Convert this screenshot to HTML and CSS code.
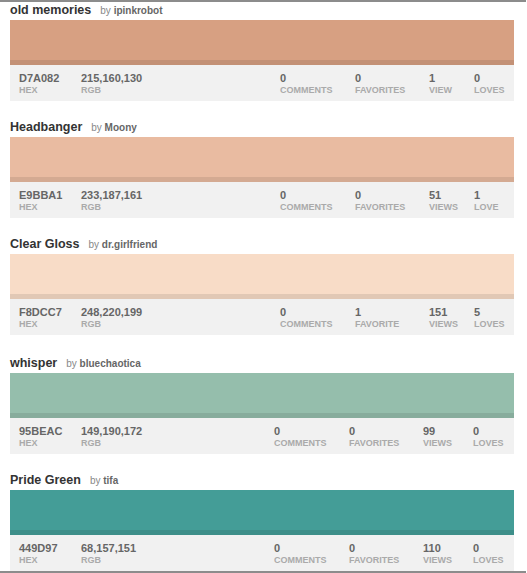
FILE: index.html
```html
<!DOCTYPE html>
<html>
<head>
<meta charset="utf-8">
<link rel="stylesheet" href="styles.css">
</head>
<body>
<div class="frame">
  <div class="card">
    <div class="title"><span class="name">old memories</span><span class="by">by <b>ipinkrobot</b></span></div>
    <div class="swatch" style="background:#D7A082"></div>
    <div class="info">
      <div class="stat hex"><b>D7A082</b><span>HEX</span></div>
      <div class="stat rgb"><b>215,160,130</b><span>RGB</span></div>
      <div class="stat comments"><b>0</b><span>COMMENTS</span></div>
      <div class="stat favs"><b>0</b><span>FAVORITES</span></div>
      <div class="stat views"><b>1</b><span>VIEW</span></div>
      <div class="stat loves"><b>0</b><span>LOVES</span></div>
    </div>
  </div>
  <div class="card">
    <div class="title"><span class="name">Headbanger</span><span class="by">by <b>Moony</b></span></div>
    <div class="swatch" style="background:#E9BBA1"></div>
    <div class="info">
      <div class="stat hex"><b>E9BBA1</b><span>HEX</span></div>
      <div class="stat rgb"><b>233,187,161</b><span>RGB</span></div>
      <div class="stat comments"><b>0</b><span>COMMENTS</span></div>
      <div class="stat favs"><b>0</b><span>FAVORITES</span></div>
      <div class="stat views"><b>51</b><span>VIEWS</span></div>
      <div class="stat loves"><b>1</b><span>LOVE</span></div>
    </div>
  </div>
  <div class="card">
    <div class="title"><span class="name">Clear Gloss</span><span class="by">by <b>dr.girlfriend</b></span></div>
    <div class="swatch" style="background:#F8DCC7"></div>
    <div class="info">
      <div class="stat hex"><b>F8DCC7</b><span>HEX</span></div>
      <div class="stat rgb"><b>248,220,199</b><span>RGB</span></div>
      <div class="stat comments"><b>0</b><span>COMMENTS</span></div>
      <div class="stat favs"><b>1</b><span>FAVORITE</span></div>
      <div class="stat views"><b>151</b><span>VIEWS</span></div>
      <div class="stat loves"><b>5</b><span>LOVES</span></div>
    </div>
  </div>
  <div class="card card-wide card-spaced">
    <div class="title"><span class="name">whisper</span><span class="by">by <b>bluechaotica</b></span></div>
    <div class="swatch" style="background:#95BEAC"></div>
    <div class="info">
      <div class="stat hex"><b>95BEAC</b><span>HEX</span></div>
      <div class="stat rgb"><b>149,190,172</b><span>RGB</span></div>
      <div class="stat comments"><b>0</b><span>COMMENTS</span></div>
      <div class="stat favs"><b>0</b><span>FAVORITES</span></div>
      <div class="stat views"><b>99</b><span>VIEWS</span></div>
      <div class="stat loves"><b>0</b><span>LOVES</span></div>
    </div>
  </div>
  <div class="card card-wide">
    <div class="title"><span class="name">Pride Green</span><span class="by">by <b>tifa</b></span></div>
    <div class="swatch" style="background:#449D97"></div>
    <div class="info">
      <div class="stat hex"><b>449D97</b><span>HEX</span></div>
      <div class="stat rgb"><b>68,157,151</b><span>RGB</span></div>
      <div class="stat comments"><b>0</b><span>COMMENTS</span></div>
      <div class="stat favs"><b>0</b><span>FAVORITES</span></div>
      <div class="stat views"><b>110</b><span>VIEWS</span></div>
      <div class="stat loves"><b>0</b><span>LOVES</span></div>
    </div>
  </div>
</div>
</body>
</html>
```

FILE: styles.css
```css
html, body {
  margin: 0;
  padding: 0;
  background: #fff;
}
body {
  font-family: "Liberation Sans", Arial, sans-serif;
}
.frame {
  width: 516px;
  height: 569px;
  border-top: 2px solid #8c8c8c;
  border-bottom: 2px solid #8c8c8c;
  overflow: hidden;
  padding-left: 10px;
  box-sizing: content-box;
}
.card {
  width: 504px;
  margin-bottom: 18px;
}
.card-spaced {
  padding-top: 2px;
}
.title {
  display: flex;
  align-items: baseline;
  height: 16px;
  line-height: 17px;
  margin-bottom: 2px;
}
.name {
  font-size: 12.5px;
  font-weight: bold;
  color: #333;
}
.by {
  font-size: 10px;
  color: #888;
  margin-left: 9px;
}
.by b {
  color: #666;
}
.swatch {
  height: 40px;
  border-bottom: 5px solid rgba(0, 0, 0, 0.09);
}
.info {
  display: flex;
  height: 36px;
  box-sizing: border-box;
  padding: 7px 0 0 9px;
  background: #f1f1f1;
}
.stat {
  display: flex;
  flex-direction: column;
}
.stat b {
  font-size: 11px;
  line-height: 13px;
  color: #666;
}
.stat span {
  font-size: 9px;
  line-height: 10px;
  font-weight: bold;
  color: #aaa;
}
.hex { width: 62px; }
.rgb { width: 199px; }
.comments { width: 75px; }
.favs { width: 74px; }
.views { width: 45px; }
.card-wide .rgb { width: 193px; }
.card-wide .views { width: 50px; }
```
